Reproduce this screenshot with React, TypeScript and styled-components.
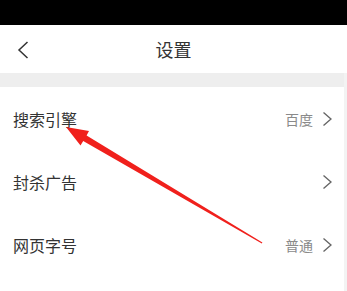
import React from "react";
import styled, { createGlobalStyle } from "styled-components";

const Global = createGlobalStyle`
  html, body { margin: 0; padding: 0; background: #ffffff; }
  body { font-family: "Noto Sans CJK SC", "Noto Sans", sans-serif; }
`;

const Page = styled.div`
  position: relative;
  width: 347px;
  height: 291px;
  overflow: hidden;
  display: flex;
  flex-direction: column;
  background: #fff;
`;

const StatusBar = styled.div`
  height: 25px;
  background: #000;
`;

const Header = styled.header`
  height: 48px;
  display: flex;
  align-items: center;
  justify-content: center;
  position: relative;
  background: #fff;
`;

const Back = styled.button`
  position: absolute;
  left: 16px;
  top: 15px;
  width: 14px;
  height: 20px;
  padding: 0;
  border: none;
  background: transparent;
  display: flex;
  align-items: center;
  justify-content: center;
`;

const Title = styled.h1`
  margin: 0;
  font-size: 18px;
  font-weight: 400;
  color: #333;
  line-height: 1;
`;

const Body = styled.div`
  flex: 1;
  display: flex;
`;

const Content = styled.div`
  flex: 1;
  display: flex;
  flex-direction: column;
`;

const Scroll = styled.div`
  width: 3px;
  background: #f3f3f3;
`;

const Gap = styled.div`
  height: 14px;
  background: #eeeeee;
`;

const Row = styled.div`
  height: 63px;
  display: flex;
  align-items: center;
  padding: 0 12px 0 13px;
`;

const Label = styled.span`
  flex: 1;
  font-size: 16px;
  color: #333;
`;

const Value = styled.span`
  font-size: 14px;
  color: #8a8a8a;
  margin-right: 9px;
`;

const RightChevron = () => (
  <svg width="10" height="16" viewBox="0 0 10 16" fill="none">
    <path d="M1.5 1.5 L9 8 L1.5 14.5" stroke="#666" strokeWidth="1.4" />
  </svg>
);

const LeftChevron = () => (
  <svg width="12" height="18" viewBox="0 0 12 18" fill="none">
    <path d="M10.5 1 L2 9 L10.5 17" stroke="#333" strokeWidth="1.5" />
  </svg>
);

const ArrowLayer = styled.svg`
  position: absolute;
  left: 0;
  top: 0;
  pointer-events: none;
`;

const rows = [
  { label: "搜索引擎", value: "百度" },
  { label: "封杀广告", value: "" },
  { label: "网页字号", value: "普通" },
];

export default function App() {
  return (
    <Page>
      <Global />
      <StatusBar />
      <Header>
        <Back>
          <LeftChevron />
        </Back>
        <Title>设置</Title>
      </Header>
      <Body>
        <Content>
          <Gap />
          {rows.map((r) => (
            <Row key={r.label}>
              <Label>{r.label}</Label>
              {r.value && <Value>{r.value}</Value>}
              <RightChevron />
            </Row>
          ))}
        </Content>
        <Scroll />
      </Body>
      <ArrowLayer width="347" height="291" viewBox="0 0 347 291">
        <polygon
          points="66,127 89,131 86.6,135.6 262.4,242.6 261.8,243.4 83.2,141 80.5,145.5"
          fill="#f0201c"
        />
      </ArrowLayer>
    </Page>
  );
}
